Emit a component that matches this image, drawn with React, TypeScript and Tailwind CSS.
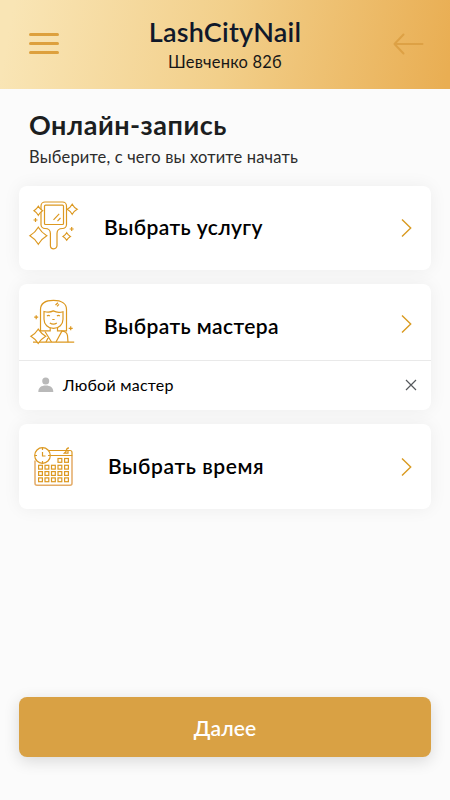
import type { ReactNode } from "react";

function MirrorIcon() {
  return (
    <svg viewBox="8 10 52 56" className="h-14 w-[52px]" fill="none" stroke="#dc9820" strokeWidth="1.2">
      <path d="M25 12h17.5a4 4 0 0 1 4 4v18.5a4 4 0 0 1-4 4c-3.500 0-5.500 1.500-5.500 5v12a3.300 3.300 0 0 1-6.600 0v-12c0-3.500-2-5-5.400-5a4 4 0 0 1-4-4V16a4 4 0 0 1 4-4z" />
      <rect x="24.5" y="15.2" width="19" height="19.3" rx="1" />
      <path d="m33.500 29.800 5.700-6M37.500 31.200l3-3.200" />
      <path fill="#fff" d="M18.300 16.200q1.600 2.800 4.300 4.500q-2.700 1.600-4.300 4.500q-1.600-2.900-4.300-4.500q2.700-1.700 4.300-4.500z" />
      <path d="M52.200 14.300q1.800 3.300 5 5q-3.200 1.800-5 5q-1.800-3.200-5-5q3.200-1.700 5-5z" />
      <path d="M18.300 37.300q3.200 5.400 8.500 8.400q-5.300 3.100-8.500 8.500q-3.100-5.400-8.400-8.500q5.300-3 8.400-8.400z" />
      <path d="M46.700 42.800q1.400 2.400 3.700 3.700q-2.300 1.400-3.700 3.700q-1.400-2.300-3.700-3.700q2.300-1.300 3.700-3.700z" />
      <path d="M15.500 28v4M13.500 30h4M51.700 37v4M49.700 39h4" />
    </svg>
  );
}

function MasterIcon() {
  return (
    <svg viewBox="8 4 52 56" className="h-14 w-[52px]" fill="none" stroke="#dc9820" strokeWidth="1.2">
      <path d="M20.500 41V19.500c0-6 5-9.100 13-9.100s13 3.300 13 9.100v21.300H37.500v-3.200M20.500 40.800h9.700v-3.200" />
      <path d="M24 21.500c3 .8 6.700.8 9.300-.6 3.300 1.700 6.700 1.700 9.700.8v7.600c0 5-4 9.100-9.500 9.100S24 34.300 24 29.300z" />
      <path d="M27 26q1.400-1.300 2.800 0M37 26q1.400-1.300 2.800 0M32.300 29.500h2.300M29.800 33q3.700 2.300 7 0" />
      <path d="m35.500 15 2.500-2.300M37 16.300l2-2" />
      <path d="m25 41.500 6.500 10.500M36 52l6-11c3.500.3 5 1.700 5.500 4.600l.5 6.600M26 52l2-4" />
      <path d="M13 52.200h41.200" />
      <path fill="#fff" d="M18.200 39.200q3 4.400 7.500 7.100q-4.500 2.700-7.500 7.100q-2.800-4.400-7.300-7.100q4.500-2.700 7.300-7.100z" />
      <path d="M16.200 25.200v4M14.200 27.200h4M50.700 36.300v4M48.700 38.300h4" />
    </svg>
  );
}

function CalendarIcon() {
  const cells = [
    [38, 23.5], [44.6, 23.5],
    [18.6, 30.3], [25, 30.3], [31.5, 30.3], [38, 30.3], [44.6, 30.3],
    [18.6, 36.6], [25, 36.6], [31.5, 36.6], [38, 36.6], [44.6, 36.6],
    [18.6, 42.9], [25, 42.9], [31.5, 42.9], [38, 42.9], [44.6, 42.9],
  ];
  return (
    <svg viewBox="8 4 52 56" className="h-14 w-[52px]" fill="none" stroke="#dc9820" strokeWidth="1.2">
      <path stroke="#e3ab67" strokeWidth="1.5" d="M52 20.500v27.700a2 2 0 0 1-2 2H17a2 2 0 0 1-2-2V25.500" />
      <path d="M29 15.500h21a2 2 0 0 1 2 2v3H30.500" />
      <circle cx="22.5" cy="20.5" r="7.8" />
      <path d="M22.500 17v4h3M22.500 13v2M22.500 26v2M15 20.500h2M28 20.500h2" />
      <path d="M49 12.800c-2 .1-2.700 1-2.700 3.300l-2 2h3.700v-2" />
      {cells.map(([x, y]) => (
        <rect key={`${x}-${y}`} x={x} y={y} width="3.8" height="3.8" />
      ))}
    </svg>
  );
}

function Chevron() {
  return (
    <svg viewBox="0 0 12 20" className="h-5 w-3" fill="none" stroke="#d99a20" strokeWidth="1.4">
      <path d="m2 1.500 8.700 8.500L2 18.500" />
    </svg>
  );
}

type RowProps = {
  icon: ReactNode;
  className: string;
  children: ReactNode;
};

function Row({ icon, className, children }: RowProps) {
  return (
    <button type="button" className={`flex w-full items-center pr-[19px] pl-[9px] text-left ${className}`}>
      {icon}
      {children}
    </button>
  );
}

export default function App() {
  return (
    <div className="flex h-[800px] w-full flex-col bg-[#fbfbfb] font-['Lato','Open_Sans',sans-serif] text-black">
      <header className="flex h-[89px] shrink-0 items-start justify-between bg-linear-[100deg,#f9e5b5_3%,#f2cf8a_50%,#e9ae53_99%] pr-[26px] pl-[29px]">
        <button type="button" aria-label="Меню" className="mt-[33px] flex w-[30px] flex-col gap-1.5">
          <span className="h-[3px] rounded-full bg-[#dda03d]" />
          <span className="h-[3px] rounded-full bg-[#dda03d]" />
          <span className="h-[3px] rounded-full bg-[#dda03d]" />
        </button>
        <div className="mr-1.5 ml-1 flex flex-col items-center whitespace-nowrap">
          <h1 className="mt-4 text-[27px] leading-8 font-semibold tracking-[0.25px] text-[#10182a]">LashCityNail</h1>
          <p className="mt-1 text-[16.5px] leading-5 tracking-[0.2px] text-[#171717]">Шевченко 82б</p>
        </div>
        <button type="button" aria-label="Назад" className="mt-[33px]">
          <svg viewBox="0 0 31 22" className="h-[22px] w-[31px]" fill="none" stroke="#dda145" strokeWidth="2" strokeLinecap="round" strokeLinejoin="round">
            <path d="M29.500 11H1.500M10.500 1.500l-9 9.500 9 9.500" />
          </svg>
        </button>
      </header>
      <main className="flex flex-1 flex-col px-[19px]">
        <h2 className="mt-5 ml-2.5 text-[27px] leading-8 font-bold tracking-[0.53px] text-[#1c1e1f]">Онлайн-запись</h2>
        <p className="mt-1.5 ml-2.5 text-[16.5px] leading-5 tracking-[0.16px] text-[#2c2c2c]">Выберите, с чего вы хотите начать</p>
        <div className="mt-[19px] flex flex-col gap-3.5">
          <section className="rounded-lg bg-white shadow-[0_0_18px_rgba(0,0,0,0.06)]">
            <Row icon={<MirrorIcon />} className="h-[84px]">
              <span className="mb-0.5 ml-6 text-[21px] leading-7 font-semibold tracking-[0.4px]">Выбрать услугу</span>
              <span className="ml-auto"><Chevron /></span>
            </Row>
          </section>
          <section className="rounded-lg bg-white shadow-[0_0_18px_rgba(0,0,0,0.06)]">
            <Row icon={<MasterIcon />} className="h-[76px]">
              <span className="mt-[7px] ml-6 text-[21px] leading-7 font-semibold tracking-[0.4px]">Выбрать мастера</span>
              <span className="mt-1 ml-auto"><Chevron /></span>
            </Row>
            <div className="flex h-[50px] items-center border-t border-[#e9e9e9] pr-3.5 pl-[19px]">
              <svg viewBox="0 0 16 16" className="mb-px h-4 w-4" fill="#b9b9b9">
                <circle cx="7.7" cy="4" r="3.5" />
                <path d="M.3 15c0-4.500 3-6.500 7.500-6.500s7.500 2 7.500 6.500z" />
              </svg>
              <span className="mb-0.5 ml-[9px] text-base tracking-[0.24px]">Любой мастер</span>
              <button type="button" aria-label="Убрать" className="mb-0.5 ml-auto">
                <svg viewBox="0 0 12 12" className="h-3 w-3" stroke="#55585c" strokeWidth="1.2">
                  <path d="m1 1 10 10M11 1 1 11" />
                </svg>
              </button>
            </div>
          </section>
          <section className="rounded-lg bg-white shadow-[0_0_18px_rgba(0,0,0,0.06)]">
            <Row icon={<CalendarIcon />} className="h-[85px]">
              <span className="mb-px ml-7 text-[21px] leading-7 font-semibold tracking-[0.6px]">Выбрать время</span>
              <span className="ml-auto"><Chevron /></span>
            </Row>
          </section>
        </div>
        <button type="button" className="mt-auto mb-[43px] h-[60px] rounded-lg bg-[#d9a144] pt-0.5 text-[21px] font-semibold tracking-[0.1px] text-white shadow-[0_4px_16px_rgba(0,0,0,0.14)]">
          Далее
        </button>
      </main>
    </div>
  );
}
